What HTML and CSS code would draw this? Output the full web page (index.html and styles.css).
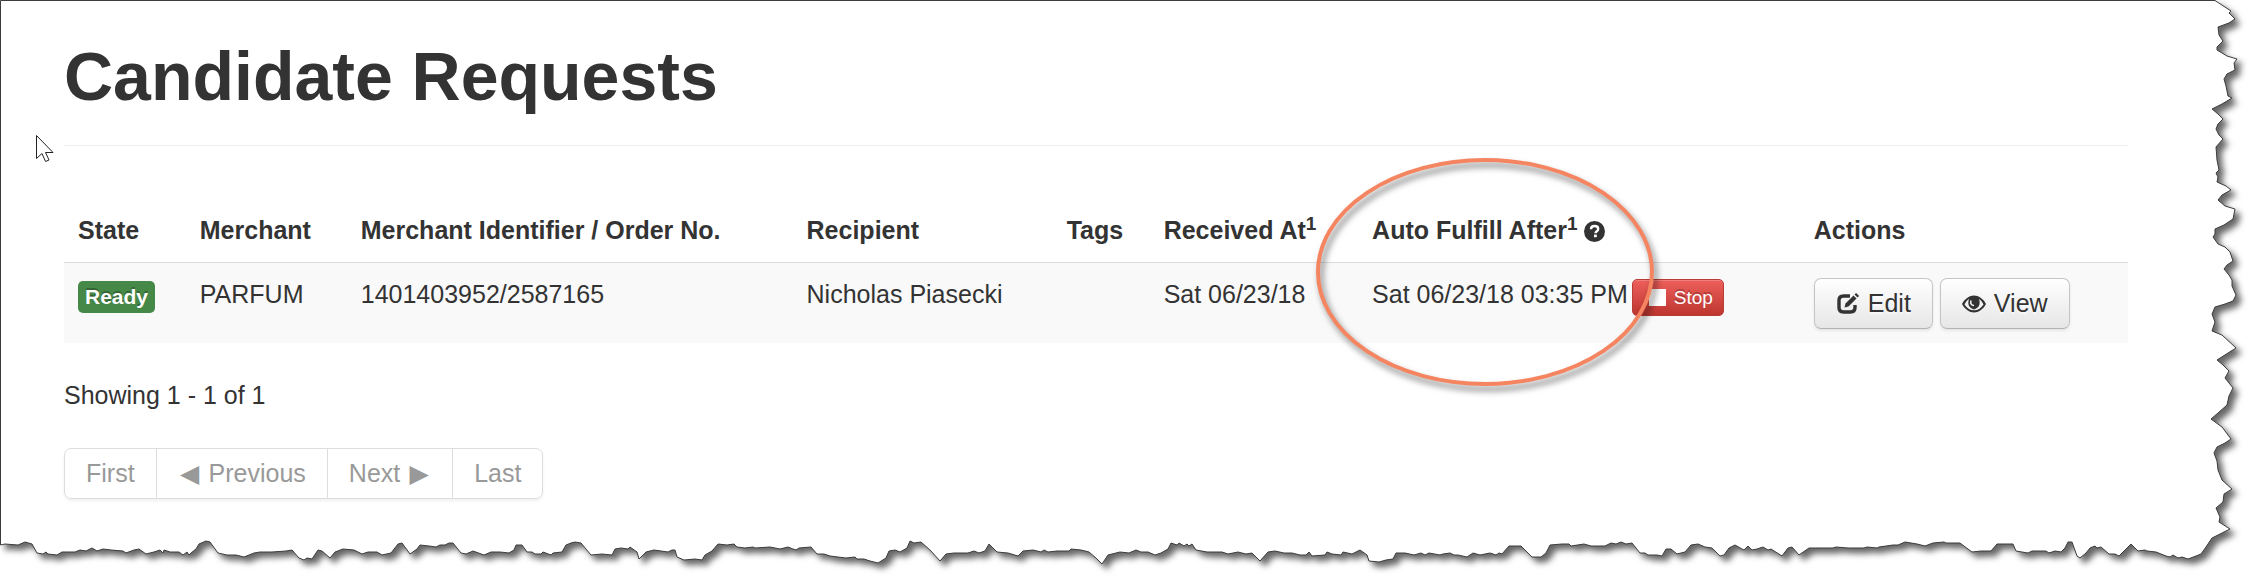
FILE: index.html
```html
<!DOCTYPE html>
<html lang="en">
<head>
  <meta charset="UTF-8">
  <meta name="viewport" content="width=device-width, initial-scale=1.0">
  <title>Candidate Requests</title>
  <link rel="stylesheet" href="styles.css">
</head>
<body>
  <!-- torn paper edge -->
  <svg class="paper" viewBox="0 0 2258 585" preserveAspectRatio="none" aria-hidden="true">
    <path d="M0.5 0.5 H2215 L2231 11 2229 13 2235 19 2229 23 2218 27 2219 35 2223 41 2217 47 2217 50 2227 56 2237 59 2234 63 2235 70 2227 74 2224 79 2226 86 2228 96 2232 98 2222 104 2212 109 2218 114 2223 119 2218 124 2216 129 2219 135 2223 139 2216 147 2217 160 2219 170 2216 173 2218 177 2217 182 2226 186 2231 190 2222 195 2218 200 2225 206 2235 209 2233 219 2224 225 2215 229 2215 234 2213 237 2218 244 2225 247 2230 252 2233 261 2227 265 2224 269 2229 275 2232 280 2232 286 2236 295 2233 301 2225 304 2215 307 2212 314 2215 322 2212 331 2222 335 2236 348 2228 353 2217 360 2223 365 2229 371 2225 378 2233 388 2229 396 2227 405 2218 413 2211 419 2222 427 2231 439 2225 443 2217 447 2214 453 2217 461 2218 470 2222 480 2232 489 2224 494 2223 502 2216 508 2220 517 2219 522 2230 529 2212 538 2206 547 2201 554 2196 556 2188 559 2182 557 2178 558 2173 555 2170 557 2166 556 2156 552 2147 551 2145 550 2138 551 2131 544 2125 550 2119 556 2115 554 2109 554 2101 547 2097 548 2095 546 2090 548 2086 553 2080 558 2077 556 2072 542 2068 542 2065 548 2061 552 2055 551 2049 553 2046 551 2032 551 2028 553 2016 551 2013 544 1997 544 1991 551 1981 551 1972 552 1960 543 1946 543 1944 542 1933 543 1925 546 1917 544 1905 542 1898 545 1893 545 1879 547 1877 548 1867 547 1864 548 1848 548 1836 547 1833 548 1815 548 1809 548 1799 555 1792 547 1788 548 1782 556 1771 549 1768 550 1763 547 1757 549 1752 550 1748 546 1744 550 1742 549 1735 545 1729 548 1724 555 1720 556 1712 548 1705 547 1698 544 1691 545 1685 552 1677 554 1671 549 1666 549 1662 556 1657 555 1648 555 1645 553 1640 553 1632 543 1626 544 1621 542 1616 544 1611 543 1605 546 1591 546 1584 544 1571 546 1569 544 1562 544 1550 545 1546 553 1541 557 1532 557 1527 552 1521 546 1509 546 1502 554 1499 553 1496 555 1490 553 1480 555 1473 553 1467 557 1458 555 1454 555 1450 553 1443 554 1440 555 1429 553 1425 555 1421 553 1414 555 1405 553 1396 553 1393 559 1386 560 1379 562 1369 561 1367 555 1360 550 1352 554 1343 552 1341 555 1332 554 1327 552 1325 555 1312 556 1309 552 1306 555 1300 555 1292 553 1284 553 1275 551 1268 552 1260 561 1252 553 1246 554 1238 552 1228 554 1222 552 1207 552 1196 550 1192 544 1189 546 1187 544 1184 546 1179 543 1177 545 1171 543 1168 549 1161 553 1155 555 1148 552 1141 552 1136 550 1129 553 1120 552 1108 555 1102 564 1096 558 1089 552 1081 550 1071 549 1069 551 1057 551 1048 552 1044 550 1041 552 1033 550 1023 551 1018 556 1008 553 997 552 989 544 985 551 979 553 974 551 968 553 960 553 954 553 946 554 940 561 930 550 921 542 914 543 910 541 907 548 900 552 895 550 889 551 886 558 878 563 870 561 864 559 857 559 855 557 846 558 838 557 830 556 824 554 817 554 811 547 799 548 796 550 793 549 788 547 780 549 770 547 755 548 753 547 745 548 737 547 734 544 727 545 718 544 712 551 705 555 702 560 695 559 684 560 677 557 675 550 672 550 668 552 654 550 646 552 639 559 637 552 630 547 628 549 621 548 615 549 612 555 602 554 591 555 581 543 575 542 571 543 566 545 562 552 553 553 551 555 543 552 541 554 535 554 532 552 527 552 522 545 516 545 514 550 509 553 500 552 491 552 484 555 473 551 466 554 461 553 453 543 449 543 445 545 440 545 436 547 429 546 420 545 417 549 410 554 402 543 398 544 391 553 382 555 377 552 368 552 362 554 354 550 343 549 335 552 330 558 322 551 318 550 312 559 307 558 304 560 299 558 292 550 286 551 272 552 260 552 254 553 244 557 236 555 227 555 218 553 210 542 206 541 199 544 196 549 191 553 189 555 187 552 183 555 179 552 170 552 164 550 163 553 160 550 154 552 146 554 139 549 134 550 126 553 123 551 111 550 103 549 97 551 92 548 86 551 80 550 75 552 66 552 62 552 57 555 48 554 46 552 43 554 37 553 32 544 25 542 18 545 5 544 0.5 545 Z"/>
  </svg>

  <main class="page">
    <header class="page-header">
      <h1>Candidate Requests</h1>
    </header>

    <table class="requests">
      <colgroup>
        <col class="col-state">
        <col class="col-merchant">
        <col class="col-order">
        <col class="col-recipient">
        <col class="col-tags">
        <col class="col-received">
        <col class="col-fulfill">
        <col class="col-actions">
      </colgroup>
      <thead>
        <tr>
          <th>State</th>
          <th>Merchant</th>
          <th>Merchant Identifier / Order No.</th>
          <th>Recipient</th>
          <th>Tags</th>
          <th>Received At<sup>1</sup></th>
          <th>
            Auto Fulfill After<sup>1</sup>
            <svg class="icon-help" viewBox="0 0 21 21" role="img" aria-label="Help">
              <circle cx="10.500" cy="10.500" r="10.500" fill="#333"/>
              <path d="M7 8.200c0-2 1.500-3.200 3.600-3.200s3.600 1.100 3.600 2.900c0 2.300-2.700 2.300-2.700 4.300" fill="none" stroke="#fff" stroke-width="2.400"/>
              <rect x="10" y="13.600" width="2.800" height="2.600" fill="#fff"/>
            </svg>
          </th>
          <th>Actions</th>
        </tr>
      </thead>
      <tbody>
        <tr>
          <td><span class="label-success">Ready</span></td>
          <td>PARFUM</td>
          <td>1401403952/2587165</td>
          <td>Nicholas Piasecki</td>
          <td></td>
          <td>Sat 06/23/18</td>
          <td>
            <div class="fulfill">
              <span>Sat 06/23/18 03:35 PM</span>
              <button type="button" class="btn-danger"><span class="icon-stop"></span>Stop</button>
            </div>
          </td>
          <td>
            <div class="actions">
              <button type="button" class="btn">
                <svg class="icon" viewBox="0 0 24 24" aria-hidden="true">
                  <path d="M14 4H7.500Q3 4 3 8.500v7Q3 20 7.500 20h7q4.500 0 4.500-4.500V13" fill="none" stroke="#333" stroke-width="3.400"/>
                  <path d="M8.500 15.500l1-4 8-8 3 3-8 8z" fill="#333"/>
                  <path d="M18.500 2.500l1.600-1.600 3 3-1.600 1.600z" fill="#333"/>
                </svg>
                Edit
              </button>
              <button type="button" class="btn">
                <svg class="icon" viewBox="0 0 24 24" aria-hidden="true">
                  <path d="M0 12C3 6.500 7.500 3.500 12 3.500S21 6.500 24 12c-3 5.500-7.500 8.500-12 8.500S3 17.500 0 12z" fill="#333"/>
                  <path d="M2.500 12.500C4 9.500 5.500 8 7 7c-1.600 4.500-.5 9 5 10.500 5.500-1.500 6.600-6 5-10.500 1.500 1 3 2.500 4.500 5.500-2.500 4-6 5.800-9.500 5.800s-7-1.800-9.500-5.800z" fill="#f4f4f4"/>
                  <path d="M9 8.500c-1 3 .5 5 3 5" fill="none" stroke="#eee" stroke-width="1.600"/>
                </svg>
                View
              </button>
            </div>
          </td>
        </tr>
      </tbody>
    </table>

    <p class="summary">Showing 1 - 1 of 1</p>

    <nav class="pagination" aria-label="Pages">
      <ul>
        <li><a href="#">First</a></li>
        <li><a href="#"><span class="arrow">◀</span> Previous</a></li>
        <li><a href="#">Next <span class="arrow">▶</span></a></li>
        <li><a href="#">Last</a></li>
      </ul>
    </nav>
  </main>

  <!-- annotations over the page -->
  <svg class="highlight" viewBox="0 0 350 240" aria-hidden="true">
    <ellipse cx="169" cy="114" rx="167" ry="112"/>
  </svg>
  <svg class="cursor" viewBox="0 0 20 30" aria-hidden="true">
    <path d="M1.500 1.500V24.500L7 19.500L10.500 27.500L14 26L10.500 18.500H18Z"/>
  </svg>
</body>
</html>
```
FILE: styles.css
```css
:root {
  --text: #333;
  --muted: #999;
  --line: #ddd;
  --stripe: #f9f9f9;
  --mark: #f58560;
}

* {
  margin: 0;
  padding: 0;
  box-sizing: border-box;
}

body {
  position: relative;
  min-height: 100vh;
  background: #fff;
  color: var(--text);
  font-family: "Liberation Sans", Arial, sans-serif;
  font-size: 25px;
  line-height: 35px;
  overflow: hidden;
}

.paper {
  position: absolute;
  top: 0;
  left: 0;
  width: 100%;
  height: 100%;
  z-index: -1;
}

.paper path {
  fill: #fff;
  stroke: #3c3c3c;
  stroke-width: 1;
  filter: drop-shadow(5px 5px 3px rgba(0, 0, 0, 0.6));
}

.page {
  padding: 41px 130px 80px 64px;
}

.page-header {
  padding-bottom: 34px;
  margin-bottom: 53px;
  border-bottom: 1px solid #eee;
}

h1 {
  font-size: 68px;
  line-height: 70px;
}

.requests {
  width: 100%;
  table-layout: fixed;
  border-collapse: separate;
  border-spacing: 0;
}

.col-state { width: 5.9%; }
.col-merchant { width: 7.8%; }
.col-order { width: 21.6%; }
.col-recipient { width: 12.6%; }
.col-tags { width: 4.7%; }
.col-received { width: 10.1%; }
.col-fulfill { width: 21.4%; }
.col-actions { width: 15.9%; }

.requests th,
.requests td {
  padding: 14px;
  text-align: left;
  vertical-align: top;
  white-space: nowrap;
}

.requests td {
  background: var(--stripe);
  border-top: 1px solid var(--line);
}

sup {
  position: relative;
  top: -9px;
  font-size: 19px;
  line-height: 0;
  vertical-align: baseline;
}

.icon-help {
  width: 21px;
  height: 21px;
  vertical-align: -3px;
}

.label-success {
  display: block;
  width: fit-content;
  margin-top: 4px;
  padding: 0 7px;
  border-radius: 5px;
  background: #468847;
  color: #fff;
  font-size: 21px;
  font-weight: bold;
  line-height: 32px;
  text-shadow: 0 -2px 0 rgba(0, 0, 0, 0.25);
}

.fulfill,
.actions {
  display: flex;
  align-items: flex-start;
}

.fulfill {
  gap: 4px;
}

.actions {
  gap: 7px;
}

.btn,
.btn-danger {
  display: flex;
  align-items: center;
  font-family: inherit;
  cursor: pointer;
}

.btn {
  gap: 8px;
  height: 51px;
  margin-top: 1px;
  padding: 0 21px;
  border: 1px solid #c5c5c5;
  border-bottom-color: #b3b3b3;
  border-radius: 7px;
  background: linear-gradient(#fff, #e6e6e6);
  box-shadow: 0 2px 3px rgba(0, 0, 0, 0.08);
  color: var(--text);
  font-size: 25px;
  text-shadow: 0 2px 2px rgba(255, 255, 255, 0.75);
}

.icon {
  width: 24px;
  height: 24px;
}

.btn-danger {
  gap: 8px;
  height: 37px;
  margin-top: 2px;
  padding: 0 10px 0 16px;
  border: 1px solid #b93c37;
  border-radius: 5px;
  background: linear-gradient(#ee5f5b, #bd362f);
  box-shadow: inset 0 1px 0 rgba(255, 255, 255, 0.2);
  color: #fff;
  font-size: 19px;
  text-shadow: 0 -2px 0 rgba(0, 0, 0, 0.25);
}

.icon-stop {
  width: 17px;
  height: 17px;
  background: #fff;
}

.summary {
  margin: 35px 0;
}

.pagination ul {
  display: flex;
  width: fit-content;
  list-style: none;
  border: 1px solid var(--line);
  border-radius: 7px;
  box-shadow: 0 2px 3px rgba(0, 0, 0, 0.06);
}

.pagination li + li {
  border-left: 1px solid var(--line);
}

.pagination a {
  display: block;
  padding: 7px 21px;
  color: var(--muted);
  text-decoration: none;
}

.arrow {
  display: inline-block;
  width: 24px;
  font-family: "DejaVu Sans", sans-serif;
  line-height: 25px;
  text-align: center;
}

.highlight {
  position: absolute;
  top: 158px;
  left: 1316px;
  width: 350px;
  height: 240px;
  overflow: visible;
  pointer-events: none;
}

.highlight ellipse {
  fill: none;
  stroke: var(--mark);
  stroke-width: 4;
  filter: drop-shadow(3px 5px 3px rgba(0, 0, 0, 0.5));
}

.cursor {
  position: absolute;
  top: 134px;
  left: 35px;
  width: 20px;
  height: 30px;
}

.cursor path {
  fill: #fff;
  stroke: #222;
  stroke-width: 1;
}
```
